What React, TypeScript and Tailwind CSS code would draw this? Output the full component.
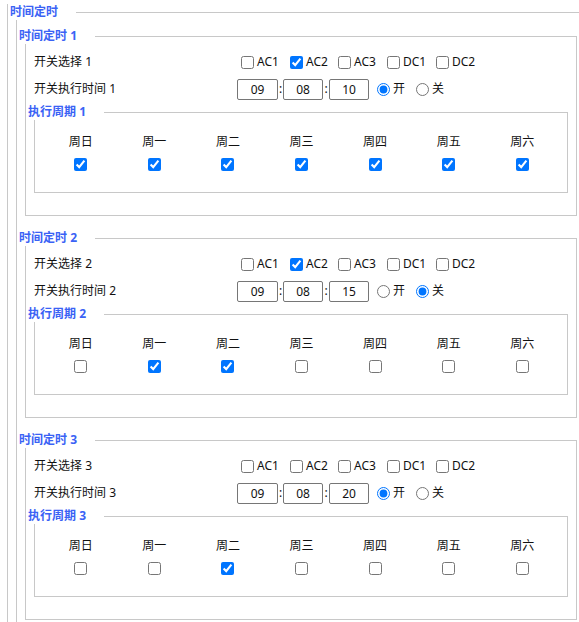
import React from "react";

const DAYS = ["周日", "周一", "周二", "周三", "周四", "周五", "周六"];
const SWITCHES = ["AC1", "AC2", "AC3", "DC1", "DC2"];
const SW_W = ["w-[49px]", "w-[48px]", "w-[49px]", "w-[49px]", "w-[50px]"];

type SectionProps = {
  n: number;
  sw: boolean[];
  time: [string, string, string];
  on: boolean;
  days: boolean[];
  first?: boolean;
};

function Section({ n, sw, time, on, days, first }: SectionProps) {
  return (
    <fieldset
      className={`border border-[#c8c8c8] w-[552px] pl-[8px] pb-[22px] ${first ? "mt-[8px]" : "mt-[14px]"}`}
    >
      <legend className="ml-[-15px] pr-[18px] text-[12px] leading-[16px] font-bold text-[#3a62f5]">
        时间定时 {n}
      </legend>
      <div className="pt-[6px] flex flex-col gap-[3px]">
        <div className="flex h-[24px] items-center">
          <div className="w-[203px] text-[12px] leading-[16px] text-[#111]">开关选择 {n}</div>
          <div className="flex items-center">
            {SWITCHES.map((s, i) => (
              <label key={s} className={`flex items-center ${SW_W[i]}`}>
                <input
                  type="checkbox"
                  defaultChecked={sw[i]}
                  className="ml-[4px] mr-[3px] w-[13px] h-[13px]"
                />
                <span className="text-[12px] leading-[16px] text-[#111]">{s}</span>
              </label>
            ))}
          </div>
        </div>
        <div className="flex h-[24px] items-center">
          <div className="w-[203px] text-[12px] leading-[16px] text-[#111]">开关执行时间 {n}</div>
          <div className="flex items-center">
            <input
              type="text"
              defaultValue={time[0]}
              className="w-[41px] h-[21px] border border-[#767676] rounded-[2px] text-center text-[12px] text-[#111] outline-none"
            />
            <span className="w-[5px] text-center text-[12px] leading-[16px] text-[#111]">:</span>
            <input
              type="text"
              defaultValue={time[1]}
              className="w-[40px] h-[21px] border border-[#767676] rounded-[2px] text-center text-[12px] text-[#111] outline-none"
            />
            <span className="w-[6px] text-center text-[12px] leading-[16px] text-[#111]">:</span>
            <input
              type="text"
              defaultValue={time[2]}
              className="w-[40px] h-[21px] border border-[#767676] rounded-[2px] text-center text-[12px] text-[#111] outline-none"
            />
            <label className="flex items-center ml-[8px]">
              <input
                type="radio"
                name={`r${n}`}
                defaultChecked={on}
                className="w-[13px] h-[13px] mr-[3px]"
              />
              <span className="text-[12px] leading-[16px] text-[#111]">开</span>
            </label>
            <label className="flex items-center ml-[11px]">
              <input
                type="radio"
                name={`r${n}`}
                defaultChecked={!on}
                className="w-[13px] h-[13px] mr-[3px]"
              />
              <span className="text-[12px] leading-[16px] text-[#111]">关</span>
            </label>
          </div>
        </div>
      </div>
      <fieldset className="border border-[#c8c8c8] mt-[3px] w-[534px] pb-[21px]">
        <legend className="ml-[-7px] pr-[18px] text-[12px] leading-[16px] font-bold text-[#3a62f5]">
          执行周期 {n}
        </legend>
        <div className="grid grid-cols-7 pl-[9px] pr-[8px] pt-[14px]">
          {DAYS.map((d, i) => (
            <div key={d} className="flex flex-col items-center">
              <span className="text-[12px] leading-[16px] text-[#111]">{d}</span>
              <input
                type="checkbox"
                defaultChecked={days[i]}
                className="mt-[8px] w-[13px] h-[13px]"
              />
            </div>
          ))}
        </div>
      </fieldset>
    </fieldset>
  );
}

export default function App() {
  return (
    <div
      className="w-[579px] h-[622px] overflow-hidden bg-white pl-[7px]"
      style={{ fontFamily: '"Noto Sans", "Noto Sans CJK SC", sans-serif' }}
    >
      <div className="border-l border-[#c8c8c8] pl-[8px] h-full">
        <fieldset className="border border-[#c8c8c8] w-[600px] mt-[4px] pl-[8px] pb-[20px]">
          <legend className="ml-[-15px] pr-[18px] text-[12px] leading-[16px] font-bold text-[#3a62f5]">
            时间定时
          </legend>
          <Section
            n={1}
            first
            sw={[false, true, false, false, false]}
            time={["09", "08", "10"]}
            on={true}
            days={[true, true, true, true, true, true, true]}
          />
          <Section
            n={2}
            sw={[false, true, false, false, false]}
            time={["09", "08", "15"]}
            on={false}
            days={[false, true, true, false, false, false, false]}
          />
          <Section
            n={3}
            sw={[false, false, false, false, false]}
            time={["09", "08", "20"]}
            on={true}
            days={[false, false, true, false, false, false, false]}
          />
        </fieldset>
      </div>
    </div>
  );
}
